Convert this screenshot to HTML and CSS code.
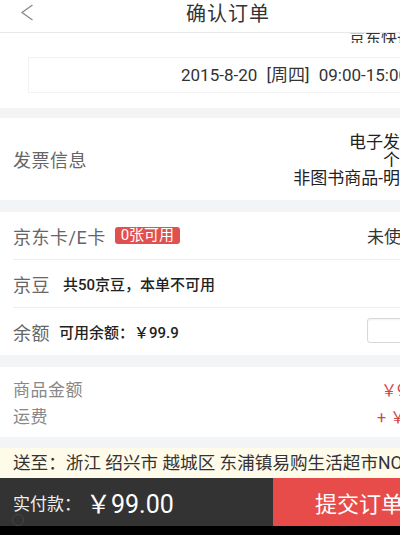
FILE: index.html
```html
<!DOCTYPE html>
<html lang="zh-CN">
<head>
  <meta charset="UTF-8" />
  <meta name="viewport" content="width=device-width, initial-scale=1.0" />
  <title>确认订单</title>
  <link rel="stylesheet" href="styles.css">
</head>
<body>
  <div class="page">

    <header class="topbar">
      <span class="back">
        <svg width="14" height="17" viewBox="0 0 14 17"><path d="M12.5 1 L2 8.5 L12.5 16" fill="none" stroke="#8a8a8a" stroke-width="1.3"/></svg>
      </span>
      <h1>确认订单</h1>
      <span></span>
    </header>

    <!-- 配送 -->
    <section class="ship">
      <div class="ship-clip"><span>京东快递</span></div>
      <div class="date-box">2015-8-20 [周四] 09:00-15:00</div>
    </section>

    <!-- 发票 -->
    <section class="block invoice">
      <span class="label">发票信息</span>
      <div class="invoice-val">
        <div>电子发票</div>
        <div>个人</div>
        <div>非图书商品-明细</div>
      </div>
    </section>

    <!-- 优惠 -->
    <section class="block cards">
      <div class="row">
        <span class="label">京东卡/E卡</span>
        <span class="badge">0张可用</span>
        <span class="row-right">未使用</span>
      </div>
      <div class="row">
        <span class="label">京豆</span>
        <span class="hint hint-bean">共50京豆，本单不可用</span>
      </div>
      <div class="row">
        <span class="label">余额</span>
        <span class="hint">可用余额：￥99.9</span>
        <span class="row-right"><span class="input-box"></span></span>
      </div>
    </section>

    <!-- 金额 -->
    <section class="block price">
      <div class="price-row">
        <span class="label light">商品金额</span>
        <span class="money">￥99.00</span>
      </div>
      <div class="price-row">
        <span class="label light">运费</span>
        <span class="money">+ ￥0.00</span>
      </div>
    </section>

    <div class="addr">送至：浙江 绍兴市 越城区 东浦镇易购生活超市NO.1</div>

    <footer class="paybar">
      <div class="pay-left">
        <span class="pay-label">实付款：</span>
        <span class="pay-num">￥99.00</span>
        <span class="ghost-dot"></span>
      </div>
      <div class="pay-btn">提交订单</div>
    </footer>
    <div class="navbar"></div>

  </div>
</body>
</html>
```

FILE: styles.css
```css
* {
  box-sizing: border-box;
  margin: 0;
  padding: 0;
}

body {
  font-family: Roboto, "Noto Sans CJK SC", sans-serif;
  background: #f3f4f6;
  color: #333;
  overflow: hidden;
  width: 400px;
  height: 535px;
}

.page {
  width: 456px;
  background: #f3f4f6;
}

/* 顶部栏 */
.topbar {
  height: 33px;
  display: grid;
  grid-template-columns: 60px 1fr 60px;
  align-items: center;
  background: #fff;
  border-bottom: 1px solid #e8e8e8;
}

.back {
  padding-left: 20px;
  display: flex;
  align-items: center;
  margin-top: -7px;
}

.topbar h1 {
  text-align: center;
  font-size: 20px;
  font-weight: normal;
  letter-spacing: 1px;
  color: #333;
  margin-top: -8px;
}

/* 配送 */
.ship {
  background: #fff;
  height: 75px;
  margin-bottom: 10px;
}

.ship-clip {
  height: 10px;
  overflow: hidden;
  display: flex;
  align-items: flex-end;
  padding-left: 349px;
  font-size: 16px;
  line-height: 16px;
}

.ship-clip span {
  display: block;
  margin-bottom: -4px;
}

.date-box {
  margin: 14px 0 0 28px;
  height: 36px;
  border: 1px solid #f3f3f3;
  border-right: none;
  padding-left: 152px;
  font-size: 17px;
  line-height: 34px;
  color: #333;
  white-space: nowrap;
  word-spacing: 5px;
}

/* 通用块 */
.block {
  background: #fff;
  margin-bottom: 12px;
}

.label {
  font-size: 18px;
  color: #666;
  letter-spacing: 0.5px;
}

.label.light {
  color: #888;
  font-size: 17px;
}

/* 发票 */
.invoice {
  height: 82px;
  display: flex;
  align-items: center;
  justify-content: space-between;
  padding: 0 39px 0 13px;
}

.invoice-val {
  text-align: right;
  font-size: 17px;
  line-height: 18px;
  color: #222;
  margin-top: 2px;
}

/* 京东卡 / 京豆 / 余额 */
.cards {
  padding-left: 13px;
}

.row {
  height: 48px;
  display: flex;
  align-items: center;
  border-bottom: 1px solid #eeeeee;
}

.row:last-child {
  border-bottom: none;
  height: 47px;
}

.badge {
  margin-left: 9px;
  background: #e0504f;
  color: #fff;
  font-size: 15px;
  line-height: 17px;
  padding: 0 6px;
  border-radius: 3px;
}

.row-right {
  margin-left: auto;
  width: 89px;
  font-size: 17px;
  color: #333;
}

.hint {
  margin-left: 9px;
  font-size: 15px;
  color: #222;
  font-weight: 500;
}

.hint-bean {
  margin-left: 13px;
}

.input-box {
  display: block;
  width: 70px;
  height: 25px;
  margin-top: -3px;
  border: 1px solid #d8d8d8;
  border-radius: 3px;
  box-shadow: inset 0 1px 2px rgba(0, 0, 0, 0.06);
}

/* 金额 */
.price {
  padding: 8px 0 8px 13px;
  margin-bottom: 11px;
}

.price-row {
  height: 27px;
  display: flex;
  align-items: center;
}

.money {
  margin-left: auto;
  width: 79px;
  color: #d2474a;
  font-size: 16px;
}

.price-row:first-child .money {
  width: 75px;
}

/* 地址 */
.addr {
  height: 30px;
  background: #fffbea;
  padding-left: 13px;
  font-size: 17.6px;
  line-height: 30px;
  color: #333;
  white-space: nowrap;
  overflow: hidden;
}

/* 底栏 */
.paybar {
  height: 48px;
  display: grid;
  grid-template-columns: 273px 1fr;
}

.pay-left {
  position: relative;
  background: #333333;
  display: flex;
  align-items: center;
  padding-left: 13px;
  color: #fff;
  overflow: hidden;
}

.pay-label {
  font-size: 17px;
  color: #eee;
}

.pay-num {
  font-size: 25px;
  margin-left: 5px;
}

/* 底部淡色圆点 */
.ghost-dot {
  position: absolute;
  left: 12px;
  top: 36px;
  width: 12px;
  height: 12px;
  border: 1px solid #474747;
  border-radius: 50%;
}

.pay-btn {
  background: #e84c4a;
  color: #fff;
  font-size: 22px;
  display: flex;
  align-items: center;
  padding-left: 42px;
}

.navbar {
  height: 9px;
  background: #000;
}
```
